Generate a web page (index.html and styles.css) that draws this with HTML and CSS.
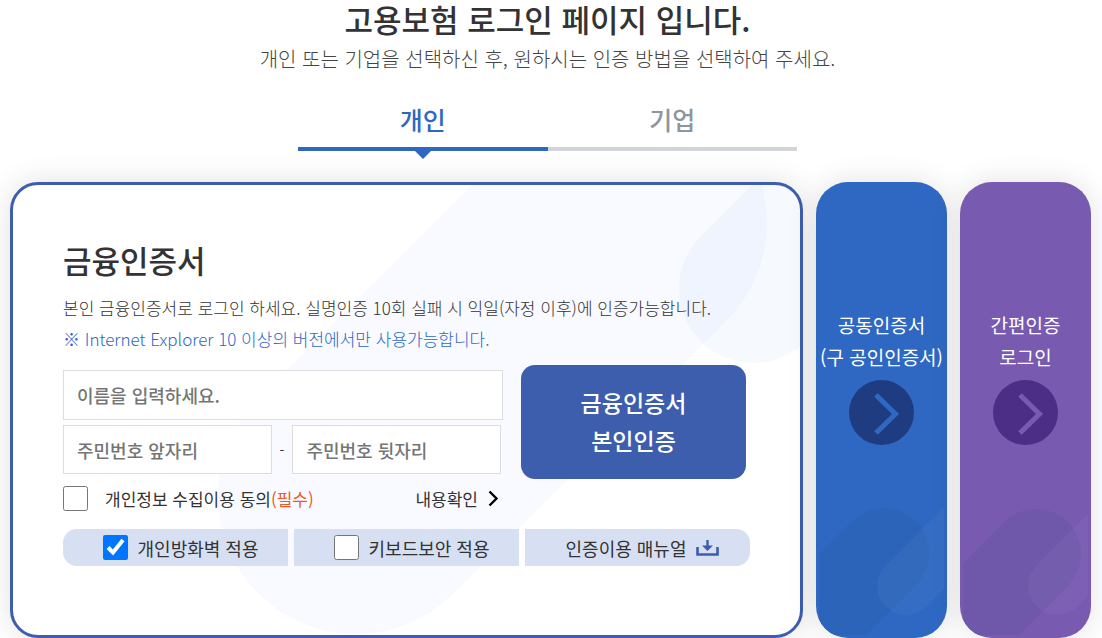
FILE: index.html
```html
<!DOCTYPE html>
<html lang="ko">
<head>
    <meta charset="UTF-8">
    <meta name="viewport" content="width=device-width, initial-scale=1.0">
    <title>고용보험 로그인</title>
    <link rel="stylesheet" href="styles.css">
</head>
<body>
    <header class="header">
        <h1>고용보험 로그인 페이지 입니다.</h1>
        <p>개인 또는 기업을 선택하신 후, 원하시는 인증 방법을 선택하여 주세요.</p>
        <nav class="tabs">
            <a href="#personal" class="tab active">개인</a>
            <a href="#company" class="tab">기업</a>
        </nav>
    </header>

    <main class="login">
        <section class="card" id="personal">
            <svg class="card-bg" width="787" height="450" viewBox="0 0 787 450" aria-hidden="true">
                <line x1="343" y1="311" x2="616" y2="38" stroke="#f8faff" stroke-width="276" stroke-linecap="round"/>
                <line x1="740" y1="104" x2="940" y2="-96" stroke="#2c6ae6" stroke-opacity="0.045" stroke-width="148" stroke-linecap="round"/>
            </svg>

            <form class="card-form">
                <h2>금융인증서</h2>
                <p class="desc">본인 금융인증서로 로그인 하세요. 실명인증 10회 실패 시 익일(자정 이후)에 인증가능합니다.</p>
                <p class="desc notice">※ Internet Explorer 10 이상의 버전에서만 사용가능합니다.</p>

                <div class="form-row">
                    <div class="fields">
                        <input type="text" class="field" placeholder="이름을 입력하세요." aria-label="이름">
                        <div class="id-number">
                            <input type="text" class="field" placeholder="주민번호 앞자리" aria-label="주민번호 앞자리">
                            <span class="dash">-</span>
                            <input type="password" class="field" placeholder="주민번호 뒷자리" aria-label="주민번호 뒷자리">
                        </div>
                        <div class="agree">
                            <input type="checkbox" id="agree">
                            <label for="agree">개인정보 수집이용 동의<span class="required">(필수)</span></label>
                            <a href="#terms" class="terms">내용확인
                                <svg width="11" height="17" viewBox="0 0 11 17" aria-hidden="true">
                                    <path d="M1.5 1.5 L8.5 8.5 L1.5 15.5" fill="none" stroke="#000" stroke-width="2.4"/>
                                </svg>
                            </a>
                        </div>
                    </div>
                    <button type="submit" class="submit">금융인증서<br>본인인증</button>
                </div>

                <div class="options">
                    <label class="option"><input type="checkbox" checked>개인방화벽 적용</label>
                    <label class="option"><input type="checkbox">키보드보안 적용</label>
                    <a href="#manual" class="option">인증이용 매뉴얼
                        <svg width="23" height="16" viewBox="0 0 23 16" aria-hidden="true">
                            <path d="M1.5 7 V14.5 H21.5 V7" fill="none" stroke="#3d5dad" stroke-width="2.6"/>
                            <path d="M11.5 0 V7" stroke="#3d5dad" stroke-width="2.4"/>
                            <path d="M6 5.5 H17 L11.5 11 Z" fill="#3d5dad"/>
                        </svg>
                    </a>
                </div>
            </form>
        </section>

        <a href="#joint" class="side side-blue">
            <svg class="side-bg" width="125" height="450" viewBox="0 0 125 450" aria-hidden="true">
                <line x1="65" y1="368" x2="-35" y2="468" stroke="#2c64b9" stroke-width="90" stroke-linecap="round"/>
                <line x1="87" y1="401" x2="187" y2="301" stroke="#fff" stroke-opacity="0.04" stroke-width="58" stroke-linecap="round"/>
            </svg>
            <span class="side-text">공동인증서<br>(구 공인인증서)</span>
            <svg class="side-arrow" width="65" height="65" viewBox="0 0 65 65" aria-hidden="true">
                <circle cx="32.5" cy="32.5" r="32.5" fill="#203c80"/>
                <path d="M27 15 L46.5 34 L27 53" fill="none" stroke="#2e68c2" stroke-width="5"/>
            </svg>
        </a>

        <a href="#simple" class="side side-purple">
            <svg class="side-bg" width="125" height="450" viewBox="0 0 125 450" aria-hidden="true">
                <line x1="73" y1="369" x2="-27" y2="469" stroke="#6f57a9" stroke-width="90" stroke-linecap="round"/>
                <line x1="94" y1="401" x2="194" y2="301" stroke="#fff" stroke-opacity="0.04" stroke-width="58" stroke-linecap="round"/>
            </svg>
            <span class="side-text">간편인증<br>로그인</span>
            <svg class="side-arrow" width="65" height="65" viewBox="0 0 65 65" aria-hidden="true">
                <circle cx="32.5" cy="32.5" r="32.5" fill="#4d2e86"/>
                <path d="M27 15 L46.5 34 L27 53" fill="none" stroke="#785ab0" stroke-width="5"/>
            </svg>
        </a>
    </main>
</body>
</html>
```
FILE: styles.css
```css
* {
    margin: 0;
    padding: 0;
    box-sizing: border-box;
}

body {
    background-color: #ffffff;
    color: #333333;
    font-family: "Noto Sans CJK KR", sans-serif;
    font-size: 18px;
}

a {
    color: inherit;
    text-decoration: none;
}

input,
button {
    font-family: inherit;
}

.header {
    padding-right: 7px;
    text-align: center;
}

.header h1 {
    font-size: 31px;
    font-weight: 500;
    line-height: 38px;
}

.header p {
    color: #444444;
    font-size: 20px;
    font-weight: 300;
    line-height: 42px;
}

.tabs {
    display: flex;
    max-width: 499px;
    margin: 14px auto 0;
}

.tab {
    position: relative;
    flex: 1;
    height: 57px;
    border-bottom: 4px solid #d1d5da;
    color: #8e959c;
    font-size: 25px;
    font-weight: 500;
    line-height: 51px;
}

.tab.active {
    border-bottom-color: #2e68c2;
    color: #2e68c2;
}

.tab.active::after {
    content: "";
    position: absolute;
    top: 100%;
    left: 50%;
    margin: 3px 0 0 -9px;
    border: 9px solid transparent;
    border-top-color: #2e68c2;
    border-bottom: 0;
}

.login {
    display: flex;
    gap: 13px;
    padding: 31px 11px 0 10px;
}

.card,
.side {
    position: relative;
    overflow: hidden;
    box-shadow: 0 0 30px rgba(0, 0, 0, 0.12);
}

.card {
    flex: 1;
    padding: 50px 50px 69px;
    border: 3px solid #3d5dad;
    border-radius: 28px;
    background-color: #ffffff;
}

.card-bg {
    position: absolute;
    top: 0;
    right: 0;
}

.card-form {
    position: relative;
}

.card-form h2 {
    margin-bottom: 8px;
    font-size: 31px;
    font-weight: 500;
    line-height: 49px;
}

.desc {
    font-size: 17px;
    font-weight: 300;
    line-height: 31px;
}

.notice {
    color: #2e68c2;
}

.form-row {
    display: flex;
    align-items: flex-start;
    gap: 18px;
    margin: 11px 4px 0 0;
}

.fields {
    flex: 1;
    padding-top: 5px;
}

.field {
    width: 100%;
    height: 50px;
    padding: 0 13px;
    border: 1px solid #dddddd;
    background-color: #ffffff;
    font-size: 18px;
    font-weight: 500;
}

.field::placeholder {
    color: #757575;
}

.id-number {
    display: flex;
    align-items: center;
    gap: 8px;
    margin-top: 5px;
    padding-right: 2px;
}

.id-number .field {
    flex: 1;
    min-width: 0;
    height: 49px;
}

.dash {
    font-size: 14px;
}

input[type="checkbox"] {
    width: 25px;
    height: 25px;
}

.agree {
    display: flex;
    align-items: center;
    gap: 17px;
    margin-top: 9px;
    padding-right: 4px;
    font-size: 17px;
    line-height: 31px;
}

.required {
    color: #f15a24;
}

.terms {
    display: flex;
    align-items: center;
    gap: 10px;
    margin-left: auto;
}

.submit {
    width: 225px;
    height: 114px;
    padding-bottom: 2px;
    border: 0;
    border-radius: 14px;
    background-color: #3d5dad;
    color: #ffffff;
    font-size: 23px;
    font-weight: 500;
    line-height: 38px;
    cursor: pointer;
}

.options {
    display: grid;
    grid-template-columns: repeat(3, 1fr);
    gap: 6px;
    margin-top: 15px;
}

.option {
    display: flex;
    align-items: center;
    justify-content: center;
    gap: 10px;
    height: 37px;
    padding-left: 10px;
    background-color: #d6e0f2;
}

.option:first-child {
    border-radius: 14px 0 0 14px;
}

.option:last-child {
    border-radius: 0 14px 14px 0;
}

.side {
    display: flex;
    flex-direction: column;
    align-items: center;
    justify-content: center;
    gap: 7px;
    width: 131px;
    padding-bottom: 67px;
    border-radius: 32px;
    color: #ffffff;
    font-size: 19px;
    line-height: 32px;
    text-align: center;
}

.side-blue {
    background-color: #2e68c2;
}

.side-purple {
    background-color: #785ab0;
}

.side-bg {
    position: absolute;
    right: 3px;
    bottom: 3px;
}

.side-text,
.side-arrow {
    position: relative;
}

.side-text {
    white-space: nowrap;
}
```
